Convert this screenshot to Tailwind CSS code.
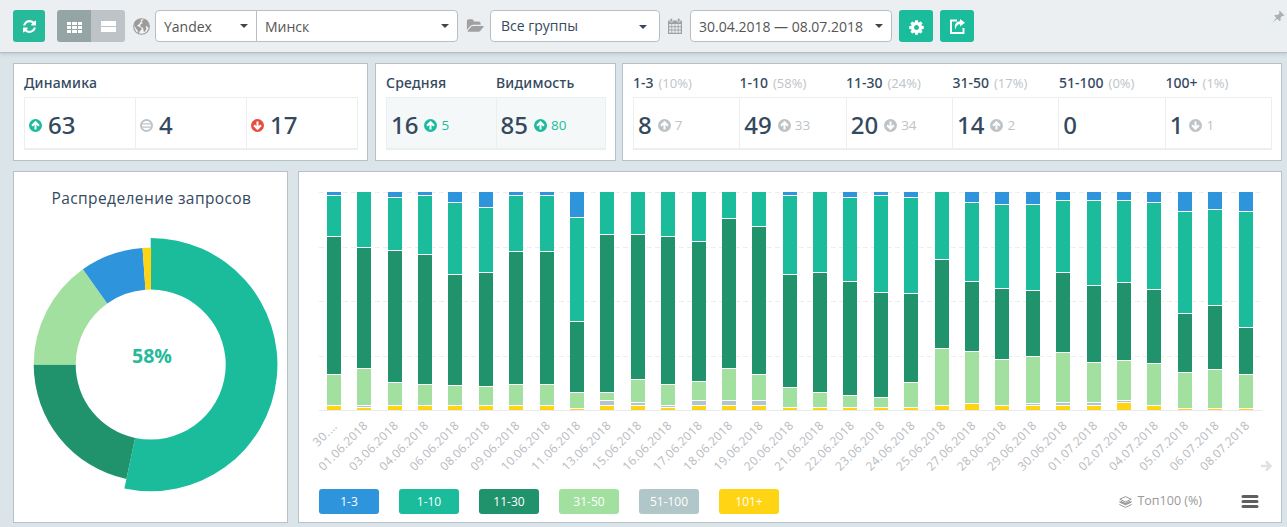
<!DOCTYPE html>
<html lang="ru">
<head>
<meta charset="utf-8">
<title>Динамика позиций</title>
<script src="https://cdn.jsdelivr.net/npm/@tailwindcss/browser@4"></script>
</head>
<body class="h-[527px] overflow-hidden bg-[#dbe4e9] font-['Open_Sans','Noto_Sans',sans-serif] text-[#34495e]">
<svg class="hidden">
  <symbol id="up" viewBox="0 0 12 12"><circle cx="6" cy="6" r="6" fill="currentColor"/><path d="M6 9.800V3M2.800 6.200l3.200-3.200 3.200 3.200" fill="none" stroke="#fff" stroke-width="1.900"/></symbol>
  <symbol id="down" viewBox="0 0 12 12"><circle cx="6" cy="6" r="6" fill="currentColor"/><path d="M6 2.200V9M2.800 5.800l3.200 3.200 3.200-3.200" fill="none" stroke="#fff" stroke-width="1.900"/></symbol>
  <symbol id="same" viewBox="0 0 12 12"><circle cx="6" cy="6" r="5.100" fill="none" stroke="currentColor" stroke-width="1.800"/><path d="M2 4.500h8M2 7.500h8" stroke="currentColor" stroke-width="1.200"/></symbol>
  <symbol id="caret" viewBox="0 0 8 4"><path d="M0 0h8L4 4z" fill="currentColor"/></symbol>
</svg>

<header class="flex h-[53px] items-start border-b border-[#b4c0c8] bg-[#ebeff1] pt-[10px] pl-[13px] text-sm text-[#555] shadow-[0_1px_4px_rgba(120,140,155,0.35)]">
  <button class="flex h-8 w-8 items-center justify-center rounded-[3px] bg-[#26b99a] text-white">
    <svg class="h-[13px] w-[13px]" viewBox="0 0 1536 1536" fill="currentColor"><path d="M1511 928q0 5-1 7-64 268-268 434.500t-478 166.500q-146 0-282.500-55t-243.500-157l-129 129q-19 19-45 19t-45-19-19-45v-448q0-26 19-45t45-19h448q26 0 45 19t19 45-19 45l-137 137q71 66 161 102t187 36q134 0 250-65t186-179q11-17 53-117 8-23 30-23h192q13 0 22.500 9.500t9.500 22.500zm25-800v448q0 26-19 45t-45 19h-448q-26 0-45-19t-19-45 19-45l138-138q-148-137-349-137-134 0-250 65t-186 179q-11 17-53 117-8 23-30 23h-199q-13 0-22.500-9.500t-9.500-22.500v-7q65-268 270-434.500t480-166.500q146 0 284 55.500t245 156.500l130-129q19-19 45-19t45 19 19 45z"/></svg>
  </button>
  <div class="ml-3 flex h-8 overflow-hidden rounded-[3px] text-white">
    <div class="flex w-[34px] items-center justify-center bg-[#95a5a6]">
      <svg class="mt-[2px] h-[11px] w-[15px]" viewBox="0 0 15 11" fill="currentColor"><path d="M0 0h4v3H0zM5 0h5v3H5zM11 0h4v3h-4zM0 4h4v3H0zM5 4h5v3H5zM11 4h4v3h-4zM0 8h4v3H0zM5 8h5v3H5zM11 8h4v3h-4z"/></svg>
    </div>
    <div class="flex w-[34px] items-center justify-center bg-[#bdc3c7]">
      <svg class="h-[11px] w-[15px]" viewBox="0 0 15 11" fill="currentColor"><path d="M0 0h15v5H0zM0 6h15v5H0z"/></svg>
    </div>
  </div>
  <svg class="mt-[8px] ml-2 h-[17px] w-[17px]" viewBox="0 0 17 17"><circle cx="8.500" cy="8.500" r="7.800" fill="#f1f3f4" stroke="#9b9b9b" stroke-width="1.100"/><path d="M2.300 3.500 5 1.500l3-.6.6 1.200-1.400.7 1 .8-1.700 1.400.2 1.300-1.800.4-.8 1 1.200.9 1.600.3 1.800 1.500-.4 1.600-1.500 1-.8 2.200-.8.300-.6-3-1.700-2.200L1 7.300zM10 2.100l2.500-.5 2.800 2.900 1 3.300-.4 2-1.200-.5-1-1.400-1 .2.700 2.600-1.300 2.800-1.200.4-.6-2.600-.6-1.700-1.700-.4-.8-1.700 1-1.800 1.600-.5-.4-.8-.9-.5z" fill="#9b9b9b"/></svg>
  <div class="ml-[5px] flex h-8 w-[102px] items-center justify-between rounded-l-[4px] border border-[#b7bfc5] bg-white pr-2 pl-2"><span class="pt-[2px]">Yandex</span><svg class="mb-px h-1 w-2 text-[#444]"><use href="#caret"/></svg></div>
  <div class="-ml-px flex h-8 w-[202px] items-center justify-between rounded-r-[4px] border border-[#b7bfc5] bg-white pr-2 pl-2"><span class="pt-[2px]">Минск</span><svg class="mb-px h-1 w-2 text-[#444]"><use href="#caret"/></svg></div>
  <svg class="mt-[8px] ml-2 h-[16px] w-[18px]" viewBox="0 0 1943 1792" fill="#a0a0a0"><path d="M1943 952q0 31-31 66l-336 396q-43 51-120.500 86.500t-143.500 35.500h-1088q-34 0-60.500-13t-26.500-43q0-31 31-66l336-396q43-51 120.500-86.500t143.500-35.500h1088q34 0 60.500 13t26.500 43zm-343-344v160h-832q-94 0-197 47.500t-164 119.500l-337 396-5 6q0-4-.5-12.500t-.5-12.500v-960q0-92 66-158t158-66h320q92 0 158 66t66 158v32h544q92 0 158 66t66 158z"/></svg>
  <div class="ml-[6px] flex h-8 w-[170px] items-center justify-between rounded-[4px] border border-[#b7bfc5] bg-white pr-3 pl-[10px] text-[#34495e]"><span class="-mt-px">Все группы</span><svg class="mt-px h-1 w-2"><use href="#caret"/></svg></div>
  <svg class="mt-[8px] ml-2 h-4 w-[14px]" viewBox="0 0 14 16"><path d="M0 2.500h14V16H0z" fill="#a0a0a0"/><path d="M2 .4h2.500v3.500H2zM9.500.4H12v3.500H9.500z" fill="#a0a0a0" stroke="#ebeff1" stroke-width=".6"/><path d="M1.200 6h2.200v2.200H1.200zM4.200 6h2.400v2.200H4.200zM7.400 6h2.400v2.200H7.400zM10.600 6h2.200v2.200h-2.200zM1.200 9.200h2.200v2.400H1.200zM4.200 9.200h2.400v2.400H4.200zM7.400 9.200h2.400v2.400H7.400zM10.600 9.200h2.200v2.400h-2.200zM1.200 12.600h2.200v2.200H1.200zM4.200 12.600h2.400v2.200H4.200zM7.400 12.600h2.400v2.200H7.400zM10.600 12.600h2.200v2.200h-2.200z" fill="#ebeff1"/></svg>
  <div class="ml-2 flex h-8 w-[202px] items-center justify-between rounded-[4px] border border-[#b7bfc5] bg-white pr-2 pl-2"><span class="pt-[2px] whitespace-nowrap">30.04.2018 — 08.07.2018</span><svg class="mb-px h-1 w-2 text-[#444]"><use href="#caret"/></svg></div>
  <button class="ml-[7px] flex h-8 w-[34px] items-center justify-center rounded-[3px] bg-[#1abc9c] text-white">
    <svg class="mt-[2px] h-[17px] w-[17px]" viewBox="0 0 1792 1792" fill="currentColor"><path d="M1152 896q0-106-75-181t-181-75-181 75-75 181 75 181 181 75 181-75 75-181zm512-109v222q0 12-8 23t-20 13l-185 28q-19 54-39 91 35 50 107 138 10 12 10 25t-9 23q-27 37-99 108t-94 71q-12 0-26-9l-138-108q-44 23-91 38-16 136-29 186-7 28-36 28h-222q-14 0-24.500-8.500t-11.500-21.500l-28-184q-49-16-90-37l-141 107q-10 9-25 9-14 0-25-11-126-114-165-168-7-10-7-23 0-12 8-23 15-21 51-66.500t54-70.500q-27-50-41-99l-183-27q-13-2-21-12.500t-8-23.500v-222q0-12 8-23t19-13l186-28q14-46 39-92-40-57-107-138-10-12-10-24 0-10 9-23 26-36 98.500-107.500t94.500-71.500q13 0 26 10l138 107q44-23 91-38 16-136 29-186 7-28 36-28h222q14 0 24.500 8.500t11.500 21.500l28 184q49 16 90 37l142-107q9-9 24-9 13 0 25 10 129 119 165 170 7 8 7 22 0 12-8 23-15 21-51 66.500t-54 70.500q26 50 41 98l183 28q13 2 21 12.500t8 23.500z"/></svg>
  </button>
  <button class="ml-[7px] flex h-8 w-[34px] items-center justify-center rounded-[3px] bg-[#1abc9c] text-white">
    <svg class="mt-[1px] h-[15px] w-[15px]" viewBox="0 0 15 15"><path d="M7 1.500H1v12.500h12.500V9" fill="none" stroke="currentColor" stroke-width="1.900"/><path d="M10 0l5 3.800-5 3.800V5.300C7.500 5.300 6 7 5.600 10.500 3.800 6.500 5.500 2.500 10 2.300z" fill="currentColor"/></svg>
  </button>
  <svg class="mr-[2px] ml-auto h-[13px] w-[13px]" viewBox="0 0 13 13"><path d="M7.500.5l5 5-1.200.5-.8-.2-2 2 .2 2.400-1 1L2.300 5.800l1-1 2.400.2 2-2-.6-1.200zM4.300 7.800l1 1L.5 12.700z" fill="#a9b1b5"/></svg>
</header>

<main class="flex flex-col gap-[10px] pt-[10px] pl-[13px]">
  <section id="stats" class="flex h-[98px]"></section>
  <section class="flex h-[352px] gap-[10px]">
    <div class="w-[275px] border border-[#b7c1c8] bg-white"><svg id="donut" class="block h-[350px] w-[273px]" viewBox="14 172 273 350"></svg></div>
    <div class="flex w-[984px] flex-col border border-[#b7c1c8] bg-white">
      <svg id="chart" class="block h-[317px] w-[982px]" viewBox="299 172 982 317"></svg>
      <div class="flex h-[25px] items-center pr-[22px] pl-5 text-xs text-white">
        <div class="flex gap-5 font-medium">
          <span class="flex h-[25px] w-[60px] items-center justify-center rounded-[3px] bg-[#2e95dd]">1-3</span>
          <span class="flex h-[25px] w-[60px] items-center justify-center rounded-[3px] bg-[#1abc9c]">1-10</span>
          <span class="flex h-[25px] w-[60px] items-center justify-center rounded-[3px] bg-[#21936c]">11-30</span>
          <span class="flex h-[25px] w-[60px] items-center justify-center rounded-[3px] bg-[#a2e09f]">31-50</span>
          <span class="flex h-[25px] w-[60px] items-center justify-center rounded-[3px] bg-[#b0c6c8]">51-100</span>
          <span class="flex h-[25px] w-[60px] items-center justify-center rounded-[3px] bg-[#ffd414]">101+</span>
        </div>
        <svg class="ml-auto h-3 w-[13px]" viewBox="0 0 13 12" fill="none" stroke="#999" stroke-width="1"><path d="M6.500.6l5.700 2.600-5.700 2.700L.8 3.200z"/><path d="M.7 5.300v.8l5.800 2.700 5.800-2.700v-.8M.7 8v.7l5.800 2.700 5.800-2.700V8"/><path d="M1.500 5.500l5 2.300 5-2.300" stroke-width="1.500"/></svg>
        <span class="ml-[5px] text-[12.500px] text-[#999]">Топ100 (%)</span>
        <svg class="ml-[39px] h-[13px] w-[18px]" viewBox="0 0 18 13" stroke="#5f5f5f" stroke-width="3" stroke-linecap="round"><path d="M2 1.500h14M2 6.500h14M2 11.500h14"/></svg>
      </div>
    </div>
  </section>
</main>

<script>
const icon = (id, color) => `<svg class="h-[13px] w-[13px] shrink-0 ${color}"><use href="#${id}"/></svg>`;
const GREEN = 'text-[#1abc9c]', GREY = 'text-[#bdc3c7]', RED = 'text-[#e74c3c]';

const value = (n) => `<span class="font-['Noto_Sans'] text-2xl leading-none font-medium">${n}</span>`;
const panel = (width, fill, cells) => `
  <div class="${width} shrink-0 border border-[#b7c1c8] bg-white pr-[9px] pl-[10px]">
    <div class="flex h-[33px] pt-[9px] text-sm leading-5">${cells.map(c => `<div class="flex-1 whitespace-nowrap font-['Noto_Sans'] font-medium ${c.share ? '' : 'tracking-[0.2px]'}">${c.title || ''}${c.share ? `<span class="ml-[5px] font-['Open_Sans'] text-[13px] font-normal text-[#bdc3c7]">(${c.share})</span>` : ''}</div>`).join('')}</div>
    <div class="flex h-[53px] border-t border-b-2 border-l border-[#ebeff0] ${fill}">${cells.map(c => `<div class="flex flex-1 items-center border-r border-[#ebeff0] pt-[3px] pl-1">${c.body}</div>`).join('')}</div>
  </div>`;
const lead = (id, color, n) => `<span class="mr-[6px] flex pt-[2px]">${icon(id, color)}</span>${value(n)}`;
const trail = (n, id, color, d) => `${value(n)}<span class="ml-[6px] flex items-center gap-1 pt-[2px] text-[13.500px] leading-none ${color}">${icon(id, color)}${d}</span>`;
document.getElementById('stats').innerHTML =
  panel('w-[355px]', 'bg-white', [
    {title: 'Динамика', body: lead('up', GREEN, 63)},
    {body: lead('same', GREY, 4)},
    {body: lead('down', RED, 17)}]) +
  '<div class="w-[7px]"></div>' +
  panel('w-[241px]', 'bg-[#f4f8f9]', [
    {title: 'Средняя', body: trail(16, 'up', GREEN, 5)},
    {title: 'Видимость', body: trail(85, 'up', GREEN, 80)}]) +
  '<div class="w-[6px]"></div>' +
  panel('w-[660px]', 'bg-white', [
    {title: '1-3', share: '10%', body: trail(8, 'up', GREY, 7)},
    {title: '1-10', share: '58%', body: trail(49, 'up', GREY, 33)},
    {title: '11-30', share: '24%', body: trail(20, 'down', GREY, 34)},
    {title: '31-50', share: '17%', body: trail(14, 'up', GREY, 2)},
    {title: '51-100', share: '0%', body: value(0)},
    {title: '100+', share: '1%', body: trail(1, 'down', GREY, 1)}]);

// Donut: [start angle, end angle, outer radius, colour]
const cx = 150.7, cy = 364.6, inner = 75;
const pt = (r, a) => { const t = a * Math.PI / 180; return (cx + r * Math.sin(t)).toFixed(2) + ' ' + (cy - r * Math.cos(t)).toFixed(2); };
const slices = [[0, 192, 126.7, '#1abc9c'], [192, 270, 117, '#21936c'], [270, 324.6, 117, '#a2e09f'], [324.6, 356, 117, '#2e95dd'], [356, 360.2, 117, '#ffd414']];
document.getElementById('donut').innerHTML =
  slices.map(([a, b, r, c]) => { const big = b - a > 180 ? 1 : 0;
    return `<path fill="${c}" d="M${pt(r, a)}A${r} ${r} 0 ${big} 1 ${pt(r, b)}L${pt(inner, b)}A${inner} ${inner} 0 ${big} 0 ${pt(inner, a)}Z"/>`; }).join('') +
  `<text x="51.500" y="204" font-size="15.500" textLength="199.500" fill="#34495e">Распределение запросов</text>
   <text x="132" y="363" font-size="19" font-weight="700" textLength="40" lengthAdjust="spacingAndGlyphs" fill="#26b99a">58%</text>`;

// Chart: dividing lines under blue, teal, dark, light and grey; 0 where that part is absent
const xs = [327,357,388,418,448,479,509,540,570,600,631,661,692,722,752,783,813,843,874,904,935,965,995,1026,1056,1087,1117,1147,1178,1208,1239];
const cuts = [[15,56,194,225,0],[0,67,188,225,227],[17,70,202,225,0],[15,74,204,225,0],[22,94,205,225,0],[27,92,206,225,0],[15,71,204,225,0],[15,71,204,225,0],[37,141,212,228,0],[0,54,212,220,225],[0,54,199,222,225],[0,56,204,225,227],[0,61,201,220,225],[0,38,188,220,225],[0,46,194,220,225],[15,94,207,227,0],[0,92,212,227,0],[17,101,215,227,0],[15,112,217,227,0],[17,113,202,227,0],[0,79,168,225,0],[22,101,171,223,0],[24,108,179,225,0],[24,110,176,223,225],[20,92,172,222,225],[20,105,182,222,225],[20,102,180,220,222],[22,109,183,225,0],[31,133,192,228,0],[29,125,189,228,0],[31,147,194,228,0]];
const days = '30.… 01.06 03.06 04.06 06.06 08.06 09.06 10.06 11.06 13.06 15.06 16.06 17.06 18.06 19.06 20.06 21.06 22.06 23.06 24.06 25.06 27.06 28.06 29.06 30.06 01.07 02.07 04.07 05.07 06.07 08.07'.split(' ');
const fills = ['#2e95dd', '#1abc9c', '#21936c', '#a2e09f', '#b0c6c8', '#ffd414'];
let out = [192, 247, 301, 356].map(y => `<path d="M319 ${y + .5}H1262" stroke="#ebeef0" stroke-dasharray="5 3"/>`).join('') + '<path d="M319 410.500H1262" stroke="#e6ebed"/>';
xs.forEach((x, i) => {
  let top = 192;
  [...cuts[i], 230].forEach((c, k) => {
    if (!c) return;
    out += `<rect x="${x}" y="${top}" width="14" height="${180 + c - top}" fill="${fills[k]}"/>`;
    if (k < 5) out += `<rect x="${x}" y="${180 + c}" width="14" height="1" fill="#fff"/>`;
    top = 181 + c;
  });
  const tx = 338 + 30.4 * i;
  out += i === 0
    ? `<text transform="translate(338 427) rotate(-45)" text-anchor="end" font-size="12" letter-spacing=".6" fill="#b9bbbf">30.…</text>`
    : `<text transform="translate(${tx} 426.500) rotate(-45)" text-anchor="end" font-size="12" textLength="63.500" fill="#b9bbbf">${days[i]}.2018</text>`;
});
out += '<path d="M1261 466h9M1266 461.500l4.500 4.500-4.500 4.500" fill="none" stroke="#dfe1e2" stroke-width="2.600"/>';
document.getElementById('chart').innerHTML = out;
</script>
</body>
</html>
